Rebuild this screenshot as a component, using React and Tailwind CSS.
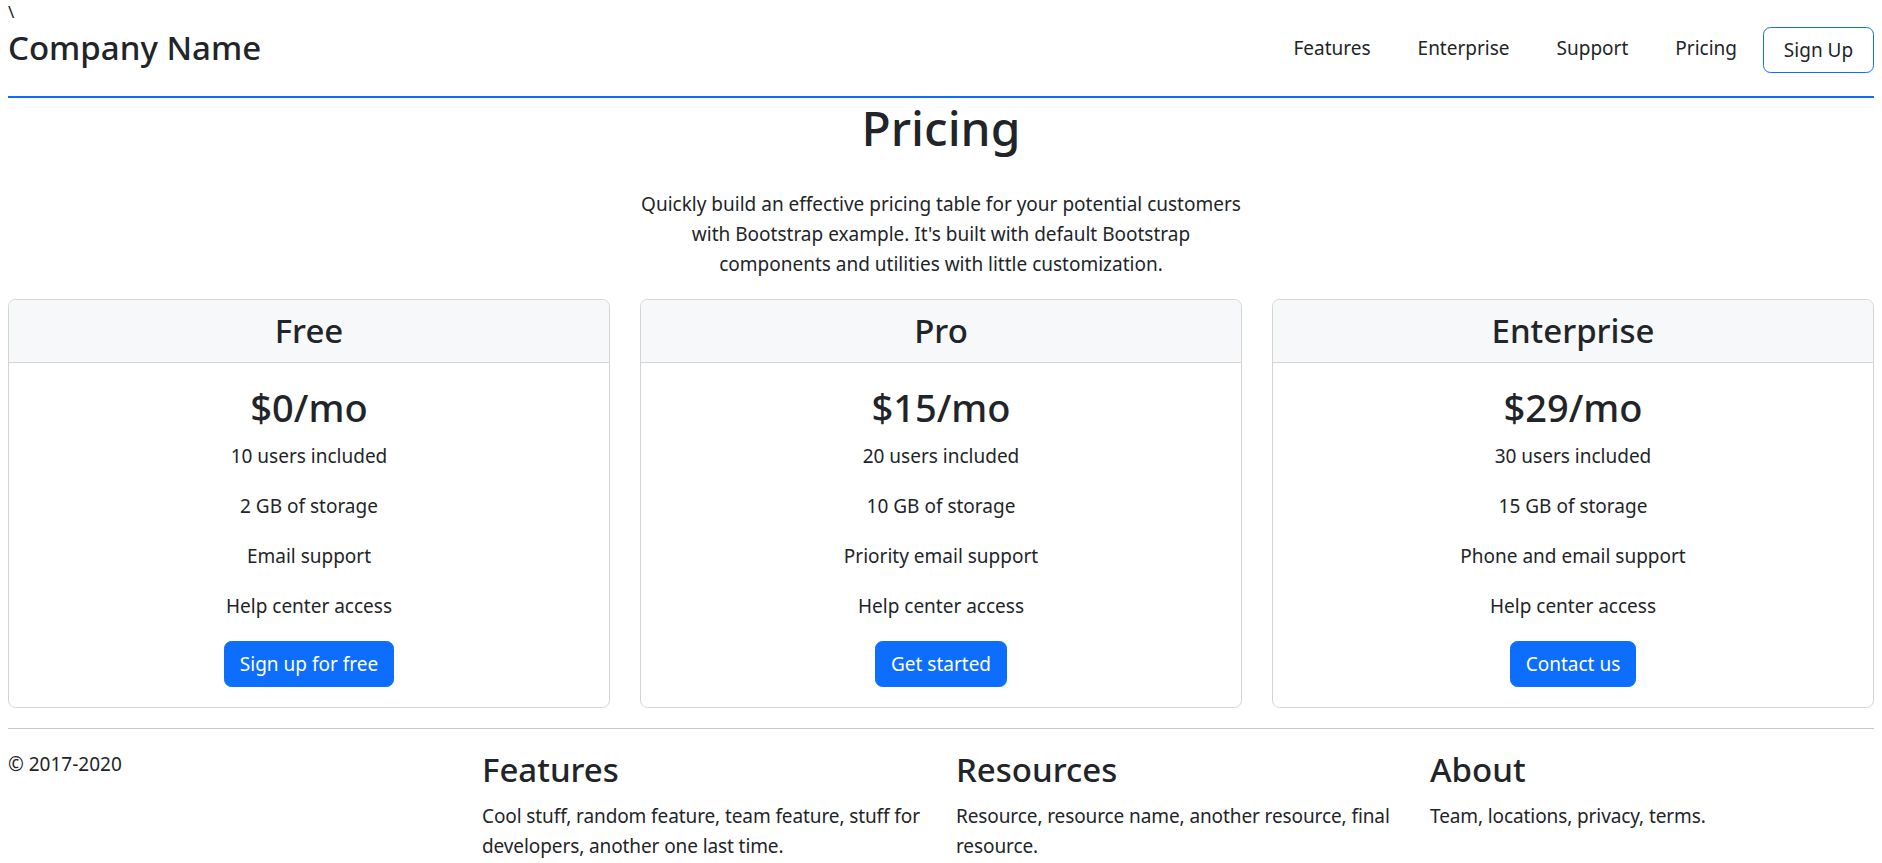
import React from "react";

const plans = [
  {
    name: "Free",
    price: "$0/mo",
    items: ["10 users included", "2 GB of storage", "Email support", "Help center access"],
    cta: "Sign up for free",
  },
  {
    name: "Pro",
    price: "$15/mo",
    items: ["20 users included", "10 GB of storage", "Priority email support", "Help center access"],
    cta: "Get started",
  },
  {
    name: "Enterprise",
    price: "$29/mo",
    items: ["30 users included", "15 GB of storage", "Phone and email support", "Help center access"],
    cta: "Contact us",
  },
];

const footerCols = [
  { title: "Features", text: "Cool stuff, random feature, team feature, stuff for developers, another one last time." },
  { title: "Resources", text: "Resource, resource name, another resource, final resource." },
  { title: "About", text: "Team, locations, privacy, terms." },
];

const App = () => {
  return (
    <div className="min-h-screen bg-white px-[8px] text-[19px] leading-[30px] text-[#212529] font-['Noto_Sans',sans-serif]">
      <div className="h-[27px] text-[17px] leading-[24px]">{"\\"}</div>

      {/* Header */}
      <header className="flex items-start justify-between border-b-2 border-[#0d6efd] pb-[23px]">
        <h3 className="text-[33px] leading-[42px] font-medium">Company Name</h3>
        <nav className="flex items-start">
          <a className="mt-[6px] leading-[30px]">Features</a>
          <a className="mt-[6px] ml-[47px] leading-[30px]">Enterprise</a>
          <a className="mt-[6px] ml-[47px] leading-[30px]">Support</a>
          <a className="mt-[6px] ml-[47px] leading-[30px]">Pricing</a>
          <button className="ml-[26px] w-[111px] rounded-[7.5px] border border-[#0d6efd] py-[7px] leading-[30px]">
            Sign Up
          </button>
        </nav>
      </header>

      {/* Intro */}
      <div className="text-center">
        <h1 className="text-[48px] leading-[60px] font-medium">Pricing</h1>
        <p className="mt-[31px] mb-[20px] flex flex-col items-center">
          <span>Quickly build an effective pricing table for your potential customers</span>
          <span>with Bootstrap example. It's built with default Bootstrap</span>
          <span>components and utilities with little customization.</span>
        </p>
      </div>

      {/* Cards */}
      <div className="grid grid-cols-3 gap-[30px]">
        {plans.map((plan) => (
          <div key={plan.name} className="overflow-hidden rounded-[7.5px] border border-[#d4d4d4] text-center">
            <div className="border-b border-[#d4d4d4] bg-[#f7f8f9] py-[10px]">
              <h3 className="text-[33px] leading-[42px] font-medium">{plan.name}</h3>
            </div>
            <div className="p-[20px]">
              <h2 className="mb-[10px] text-[38px] leading-[48px] font-medium">{plan.price}</h2>
              {plan.items.map((item) => (
                <p key={item} className="mb-[20px]">{item}</p>
              ))}
              <button className="rounded-[7.5px] border border-[#0d6efd] bg-[#0d6efd] px-[15px] py-[7px] leading-[30px] text-white">
                {plan.cta}
              </button>
            </div>
          </div>
        ))}
      </div>

      <hr className="my-[20px] border-t border-[#c8c9ca]" />

      {/* Footer */}
      <footer className="grid grid-cols-4 gap-x-[30px]">
        <div>© 2017-2020</div>
        {footerCols.map((col) => (
          <div key={col.title}>
            <h3 className="mb-[10px] text-[33px] leading-[42px] font-medium">{col.title}</h3>
            <p className="tracking-[-0.1px]">{col.text}</p>
          </div>
        ))}
      </footer>
    </div>
  );
};

export default App;
